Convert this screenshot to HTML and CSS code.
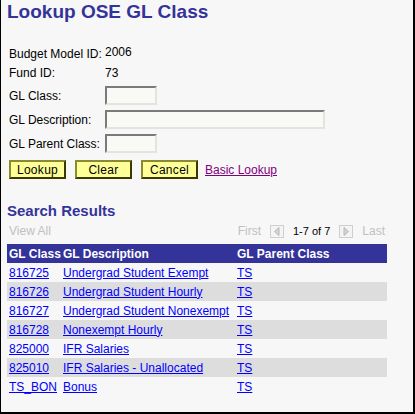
FILE: index.html
```html
<!DOCTYPE html>
<html>
<head>
    <title>Lookup OSE GL Class</title>
    <link rel="stylesheet" href="styles.css">
</head>
<body>
    <div class="page">
        <h1 class="title">Lookup OSE GL Class</h1>

        <div class="criteria">
            <div class="info-row">
                <span class="label">Budget Model ID:</span>
                <span class="value value-raised">2006</span>
            </div>
            <div class="info-row">
                <span class="label">Fund ID:</span>
                <span class="value">73</span>
            </div>
            <div class="field-row">
                <label class="label" for="glClass">GL Class:</label>
                <input type="text" id="glClass" class="input-short">
            </div>
            <div class="field-row">
                <label class="label" for="glDescr">GL Description:</label>
                <input type="text" id="glDescr" class="input-long">
            </div>
            <div class="field-row">
                <label class="label" for="glParent">GL Parent Class:</label>
                <input type="text" id="glParent" class="input-short">
            </div>
            <div class="buttons">
                <button>Lookup</button>
                <button>Clear</button>
                <button>Cancel</button>
                <a href="#" class="basic-link">Basic Lookup</a>
            </div>
        </div>

        <h2 class="section-title">Search Results</h2>
        <div class="results-nav">
            <span class="view-all">View All</span>
            <div class="pager">
                <span class="pager-text">First</span>
                <svg class="pager-btn" width="14" height="13" viewBox="0 0 14 13">
                    <rect x="0.5" y="0.5" width="13" height="12" fill="#f4f4f4" stroke="#cfcfcf"/>
                    <polygon points="9,2.5 9,10.5 4.5,6.5" fill="#d4d4d4" stroke="#b8b8b8"/>
                </svg>
                <span class="pager-count">1-7 of 7</span>
                <svg class="pager-btn" width="14" height="13" viewBox="0 0 14 13">
                    <rect x="0.5" y="0.5" width="13" height="12" fill="#f4f4f4" stroke="#cfcfcf"/>
                    <polygon points="5,2.5 5,10.5 9.5,6.5" fill="#d4d4d4" stroke="#b8b8b8"/>
                </svg>
                <span class="pager-text">Last</span>
            </div>
        </div>

        <table class="results">
            <thead>
                <tr>
                    <th class="col-class">GL Class</th>
                    <th class="col-descr">GL Description</th>
                    <th>GL Parent Class</th>
                </tr>
            </thead>
            <tbody>
                <tr><td><a href="#">816725</a></td><td><a href="#">Undergrad Student Exempt</a></td><td><a href="#">TS</a></td></tr>
                <tr><td><a href="#">816726</a></td><td><a href="#">Undergrad Student Hourly</a></td><td><a href="#">TS</a></td></tr>
                <tr><td><a href="#">816727</a></td><td><a href="#">Undergrad Student Nonexempt</a></td><td><a href="#">TS</a></td></tr>
                <tr><td><a href="#">816728</a></td><td><a href="#">Nonexempt Hourly</a></td><td><a href="#">TS</a></td></tr>
                <tr><td><a href="#">825000</a></td><td><a href="#">IFR Salaries</a></td><td><a href="#">TS</a></td></tr>
                <tr><td><a href="#">825010</a></td><td><a href="#">IFR Salaries - Unallocated</a></td><td><a href="#">TS</a></td></tr>
                <tr><td><a href="#">TS_BON</a></td><td><a href="#">Bonus</a></td><td><a href="#">TS</a></td></tr>
            </tbody>
        </table>
    </div>
</body>
</html>
```

FILE: styles.css
```css
body {
    margin: 0;
    font-family: Arial, "Liberation Sans", sans-serif;
    font-size: 12px;
    color: #000;
}
.page {
    box-sizing: border-box;
    width: 415px;
    height: 414px;
    background-color: #f7f7f7;
    border-left: 1px solid #000;
    border-right: 2px solid #000;
    border-bottom: 2px solid #000;
    padding-left: 6px;
    padding-top: 1px;
}
.title {
    margin: 0;
    font-size: 19px;
    font-weight: bold;
    color: #333399;
}
.criteria {
    margin-top: 21px;
    padding-left: 2px;
}
.info-row,
.field-row {
    display: flex;
    align-items: center;
    height: 19px;
}
.field-row {
    margin-top: 4px;
}
.field-row + .field-row {
    margin-top: 5px;
}
.label {
    width: 96px;
}
.value-raised {
    position: relative;
    top: -2px;
}
input[type="text"] {
    box-sizing: border-box;
    height: 19px;
    padding: 0 2px;
    margin: 0;
    border: 2px solid;
    border-color: #7b7b7b #e4e4dc #e4e4dc #7b7b7b;
    background-color: #f9f9f6;
    font-family: Arial, "Liberation Sans", sans-serif;
    font-size: 12px;
}
.input-short {
    width: 52px;
}
.input-long {
    width: 220px;
}
.buttons {
    display: flex;
    align-items: center;
    margin-top: 7px;
}
button {
    box-sizing: border-box;
    width: 57px;
    height: 19px;
    padding: 0;
    margin-right: 9px;
    background-color: #ffff99;
    border: 2px solid;
    border-color: #8a8a2e #3a3a00 #3a3a00 #8a8a2e;
    font-family: Arial, "Liberation Sans", sans-serif;
    font-size: 12px;
    letter-spacing: 0.3px;
    color: #000;
}
.basic-link {
    margin-left: -2px;
    color: #800080;
}
.section-title {
    margin: 23px 0 0 0;
    font-size: 15px;
    font-weight: bold;
    color: #333399;
}
.results-nav {
    display: flex;
    align-items: center;
    justify-content: space-between;
    width: 376px;
    height: 14px;
    margin-top: 5px;
    padding-left: 2px;
}
.view-all {
    color: #c0c0c0;
}
.pager {
    display: flex;
    align-items: center;
    gap: 9px;
}
.pager-text {
    color: #c0c0c0;
}
.pager-count {
    font-size: 11px;
}
.pager-btn {
    display: block;
}
.results {
    width: 380px;
    margin-top: 6px;
    border-collapse: collapse;
    table-layout: fixed;
}
.results th,
.results td {
    height: 19px;
    padding: 0 2px;
    text-align: left;
    vertical-align: middle;
    white-space: nowrap;
}
.results th {
    background-color: #333399;
    color: #fff;
    font-weight: bold;
}
.col-class {
    width: 50px;
}
.col-descr {
    width: 170px;
}
.results tbody tr:nth-child(even) td {
    background-color: #dddddd;
}
.results a {
    color: #0000ff;
}
```
